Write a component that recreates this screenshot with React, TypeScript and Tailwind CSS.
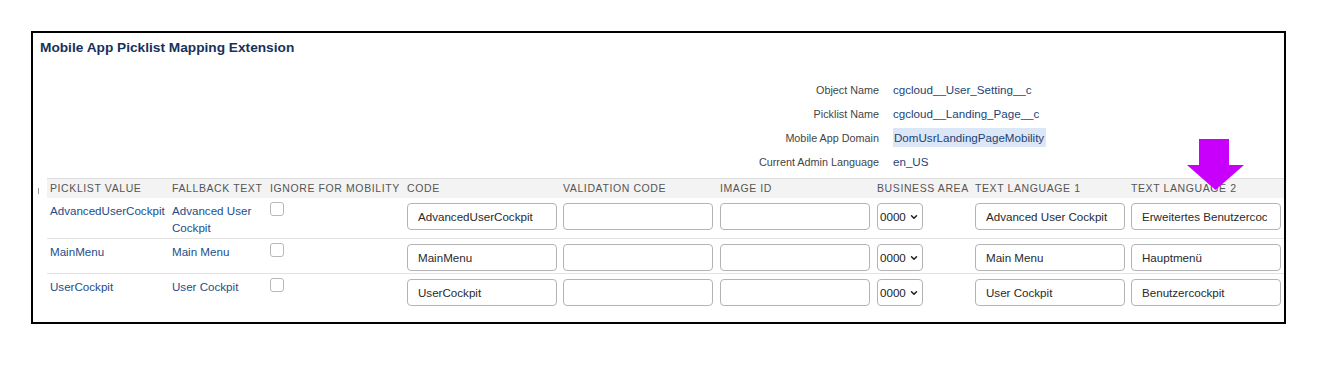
import { ChevronDown } from 'lucide-react';

const rows = [
  {
    value: 'AdvancedUserCockpit',
    fallback: 'Advanced User Cockpit',
    code: 'AdvancedUserCockpit',
    lang1: 'Advanced User Cockpit',
    lang2: 'Erweitertes Benutzercockpit',
  },
  { value: 'MainMenu', fallback: 'Main Menu', code: 'MainMenu', lang1: 'Main Menu', lang2: 'Hauptmenü' },
  { value: 'UserCockpit', fallback: 'User Cockpit', code: 'UserCockpit', lang1: 'User Cockpit', lang2: 'Benutzercockpit' },
];

const info = [
  { label: 'Object Name', value: 'cgcloud__User_Setting__c' },
  { label: 'Picklist Name', value: 'cgcloud__Landing_Page__c' },
  { label: 'Mobile App Domain', value: 'DomUsrLandingPageMobility', highlight: true },
  { label: 'Current Admin Language', value: 'en_US' },
];

const headers = [
  'Picklist Value',
  'Fallback Text',
  'Ignore for Mobility',
  'Code',
  'Validation Code',
  'Image ID',
  'Business Area',
  'Text Language 1',
  'Text Language 2',
];

const gridCols = 'grid grid-cols-[122px_98px_137px_156px_157px_157px_98px_156px_156px]';

const TextField = ({ value }: { value: string }) => (
  <input
    type="text"
    readOnly
    defaultValue={value}
    className="mt-[1px] h-[27px] w-[150px] rounded-[4px] border border-[#b4b4b4] bg-white pl-[10px] pr-[13px] text-[11.6px] text-[#2a2a2a] outline-none"
  />
);

const App = () => {
  return (
    <div className="min-h-[376px] bg-white pl-[31px] pt-[31px] font-['Liberation_Sans',Arial,sans-serif]">
      <div className="relative h-[293px] w-[1255px] border-2 border-black">
        <h1 className="pl-[7px] pt-[6px] text-[13.7px] font-bold leading-[18px] text-[#16325c]">
          Mobile App Picklist Mapping Extension
        </h1>

        <div className="mt-[21px] grid grid-cols-[846px_auto] gap-x-[14px]">
          {info.map((item) => (
            <div key={item.label} className="contents">
              <div className="text-right text-[10.8px] leading-[24px] text-[#444444]">{item.label}</div>
              <div className="text-[11.6px] leading-[24px] text-[#1b4377]">
                <span className={item.highlight ? 'bg-[#dbe6f6] py-[3px] pl-[1px] pr-[2px]' : ''}>{item.value}</span>
              </div>
            </div>
          ))}
        </div>

        <div className="ml-[14px] mt-[4px]">
          <div className={`${gridCols} h-[20px] items-center border-t border-[#dedede] bg-[#f3f3f3]`}>
            {headers.map((h) => (
              <div key={h} className="pl-[3px] text-[10.5px] uppercase tracking-[0.6px] whitespace-nowrap text-[#555555]">
                {h}
              </div>
            ))}
          </div>

          {rows.map((r, i) => (
            <div
              key={r.value}
              className={`${gridCols} items-start pb-[2px] pt-[4px] ${i < rows.length - 1 ? 'border-b border-[#e3e3e3]' : ''}`}
            >
              <div className="pl-[3px] text-[11.6px] leading-[17px] text-[#1d4e89]">{r.value}</div>
              <div className="pl-[3px] text-[11.6px] leading-[17px] text-[#1d4e89]">{r.fallback}</div>
              <div className="pl-[3px]">
                <div className="h-[14px] w-[14px] rounded-[3px] border border-[#b8b8b8] bg-white" />
              </div>
              <div className="pl-[3px]">
                <TextField value={r.code} />
              </div>
              <div className="pl-[3px]">
                <TextField value="" />
              </div>
              <div className="pl-[3px]">
                <TextField value="" />
              </div>
              <div className="pl-[3px]">
                <div className="mt-[1px] flex h-[27px] w-[46px] items-center justify-between rounded-[4px] border border-[#b4b4b4] bg-white pl-[2px] pr-[3px] text-[11.6px] text-[#1c1c1c]">
                  <span>0000</span>
                  <ChevronDown className="h-[10px] w-[10px]" strokeWidth={3.5} />
                </div>
              </div>
              <div className="pl-[3px]">
                <TextField value={r.lang1} />
              </div>
              <div className="pl-[3px]">
                <TextField value={r.lang2} />
              </div>
            </div>
          ))}
        </div>

        {/* column resize handle */}
        <div className="absolute left-[4px] top-[155px] h-[6px] w-[2px] border-r border-[#9a9a9a]" />

        {/* annotation arrow */}
        <svg className="absolute left-[1154px] top-[106px]" width="57" height="51" viewBox="0 0 57 51">
          <polygon points="12,0 42,0 42,26 57,26 28.5,51 0,26 12,26" fill="#c800fb" />
        </svg>
      </div>
    </div>
  );
};

export default App;
